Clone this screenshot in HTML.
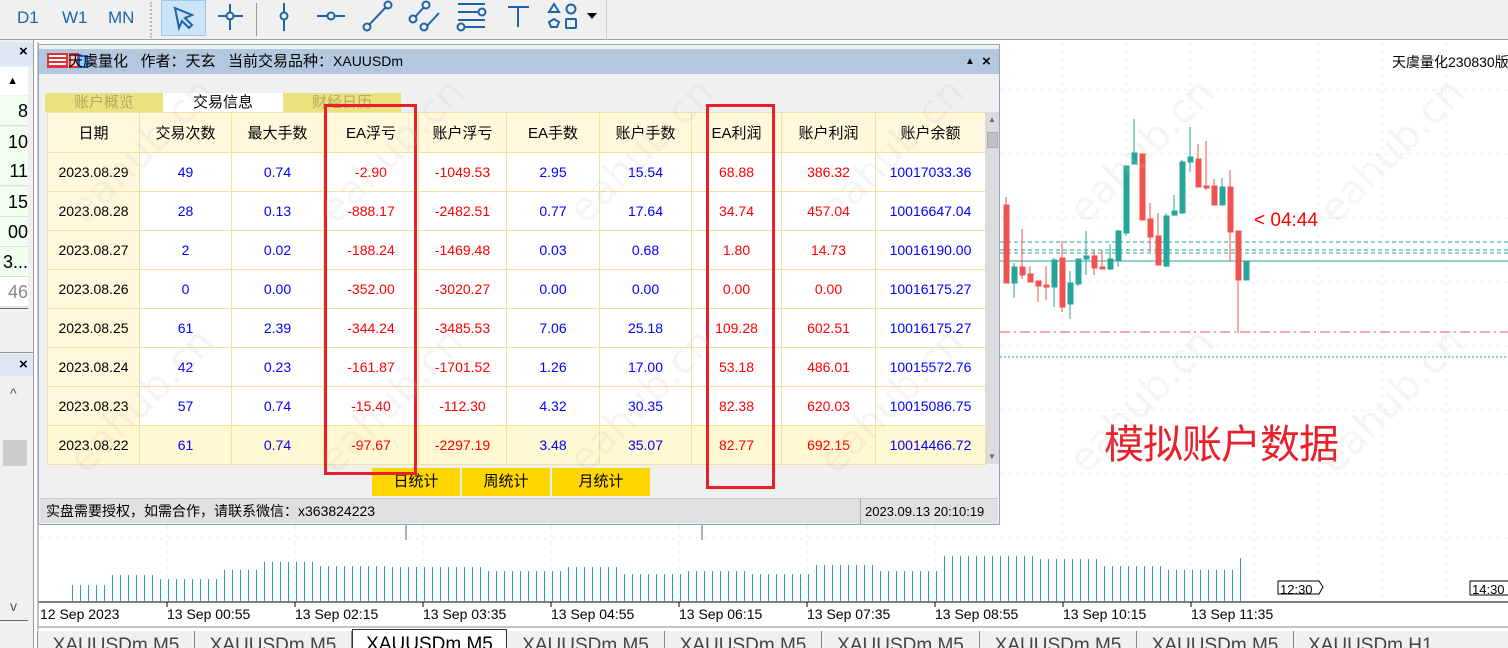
<!DOCTYPE html>
<html><head><meta charset="utf-8">
<style>
*{margin:0;padding:0;box-sizing:border-box}
html{width:1508px;height:648px;overflow:hidden}
body{width:1508px;height:648px;overflow:hidden;background:#fff;font-family:"Liberation Sans","Noto Sans CJK SC",sans-serif;position:relative}
.a{position:absolute}
.tb{left:0;top:0;width:1508px;height:40px;background:#f0f0f0;border-bottom:1px solid #a0a0a0}
.tf{top:8px;font-size:17px;color:#1e64a8}
.lp{left:0;top:40px;width:34px;height:608px;background:#f0f0f0;border-right:1px solid #999}
.num{left:0;width:28px;text-align:right;font-size:18px;color:#000;height:30px;line-height:30px;background:#f0fff0;border-bottom:1px solid #ddd}
.dlg{left:38px;top:44px;width:962px;height:481px;background:#f0f0f0;border:1px solid #8ea6c6}
.title{left:0;top:4px;width:960px;height:25px;background:#b3c7df;font-size:15px;line-height:25px;color:#000}
table{border-collapse:collapse;position:absolute;left:8px;top:67px;font-size:14px}
td{border:1px solid #eee29c;text-align:center;height:39px;background:#fff}
td.d{background:#fff8dc;color:#000}
tr.h td{background:#fff8dc;color:#000;font-size:15px;height:40px}
tr.y td{background:#fff8d0}
.b{color:#0000ff}.r{color:#ff0000}
.tab{top:48px;height:19px;font-size:15px;line-height:19px;text-align:center;color:#b8a860;background:#ece17f}
.btn{top:423px;height:28px;background:#ffd700;font-size:15px;line-height:28px;text-align:center;color:#000}
.st{left:1px;top:453px;width:958px;height:25px;background:#e0e0e0;font-size:14px;line-height:25px;color:#000;border-top:1px solid #ccc}
.rb{border:3px solid #e8202a}
.tl{top:606px;font-size:14px;color:#000}
.tabb{top:631px;height:17px;font-size:19px;line-height:30px;color:#444;background:#f0f0f0;border-right:1px solid #888;text-align:center;overflow:hidden}
.wm{font-size:40px;color:rgba(190,190,190,0.16);transform:rotate(-45deg);transform-origin:left top;font-family:"DejaVu Sans",sans-serif;white-space:nowrap}
.v{position:absolute;background:repeating-linear-gradient(90deg,#26a69a 0 1px,transparent 1px 8px)}
</style></head><body>

<svg class="a" style="left:0;top:0" width="1508" height="648">
<g stroke="#ececec" stroke-dasharray="4,4">
<line x1="1062" y1="42" x2="1062" y2="600"/><line x1="1126" y1="42" x2="1126" y2="600"/><line x1="1190" y1="42" x2="1190" y2="600"/><line x1="1254" y1="42" x2="1254" y2="600"/><line x1="1318" y1="42" x2="1318" y2="600"/><line x1="1382" y1="42" x2="1382" y2="600"/><line x1="1446" y1="42" x2="1446" y2="600"/>
<line x1="1000" y1="90" x2="1508" y2="90"/><line x1="1000" y1="154" x2="1508" y2="154"/><line x1="1000" y1="218" x2="1508" y2="218"/><line x1="1000" y1="282" x2="1508" y2="282"/><line x1="1000" y1="346" x2="1508" y2="346"/><line x1="1000" y1="410" x2="1508" y2="410"/><line x1="1000" y1="474" x2="1508" y2="474"/><line x1="40" y1="538" x2="1508" y2="538"/>
<line x1="167" y1="525" x2="167" y2="600"/><line x1="295" y1="525" x2="295" y2="600"/><line x1="423" y1="525" x2="423" y2="600"/><line x1="551" y1="525" x2="551" y2="600"/><line x1="679" y1="525" x2="679" y2="600"/><line x1="807" y1="525" x2="807" y2="600"/><line x1="935" y1="525" x2="935" y2="600"/>
</g>
<g stroke="#26a69a" stroke-dasharray="4,3"><line x1="1000" y1="242" x2="1508" y2="242"/><line x1="1000" y1="250" x2="1508" y2="250"/><line x1="1000" y1="253" x2="1508" y2="253"/><line x1="1000" y1="357" x2="1508" y2="357" stroke-dasharray="2,2"/></g>
<line x1="1000" y1="261" x2="1508" y2="261" stroke="#26a69a"/>
<line x1="1000" y1="332" x2="1508" y2="332" stroke="#ef5350" stroke-dasharray="10,4,2,4"/>
<g stroke-width="1">
<g fill="#ef5350" stroke="#ef5350">
<line x1="1006" y1="197" x2="1006" y2="283"/><rect x="1004" y="205" width="5" height="78"/>
<line x1="1022" y1="229" x2="1022" y2="279"/><rect x="1020" y="267" width="5" height="8"/>
<line x1="1030" y1="266" x2="1030" y2="282"/><rect x="1028" y="274" width="5" height="8"/>
<line x1="1038" y1="281" x2="1038" y2="302"/><rect x="1036" y="281" width="5" height="5"/>
<line x1="1046" y1="266" x2="1046" y2="300"/><rect x="1044" y="285" width="5" height="2"/>
<line x1="1062" y1="241" x2="1062" y2="312"/><rect x="1060" y="258" width="5" height="49"/>
<line x1="1094" y1="250" x2="1094" y2="275"/><rect x="1092" y="256" width="5" height="12"/>
<line x1="1102" y1="250" x2="1102" y2="269"/><rect x="1100" y="267" width="5" height="2"/>
<rect x="1140" y="154" width="5" height="66"/>
<line x1="1150" y1="203" x2="1150" y2="252"/><rect x="1148" y="219" width="5" height="18"/>
<line x1="1158" y1="213" x2="1158" y2="265"/><rect x="1156" y="236" width="5" height="29"/>
<line x1="1198" y1="144" x2="1198" y2="187"/><rect x="1196" y="159" width="5" height="28"/>
<line x1="1206" y1="141" x2="1206" y2="190"/><rect x="1204" y="186" width="5" height="2"/>
<line x1="1214" y1="179" x2="1214" y2="205"/><rect x="1212" y="186" width="5" height="19"/>
<line x1="1230" y1="170" x2="1230" y2="261"/><rect x="1228" y="187" width="5" height="45"/>
<line x1="1238" y1="231" x2="1238" y2="333"/><rect x="1236" y="231" width="5" height="49"/>
</g>
<g fill="#26a69a" stroke="#26a69a">
<line x1="1014" y1="263" x2="1014" y2="298"/><rect x="1012" y="267" width="5" height="16"/>
<line x1="1054" y1="258" x2="1054" y2="307"/><rect x="1052" y="260" width="5" height="27"/>
<line x1="1070" y1="271" x2="1070" y2="319"/><rect x="1068" y="283" width="5" height="21"/>
<line x1="1078" y1="259" x2="1078" y2="286"/><rect x="1076" y="259" width="5" height="25"/>
<line x1="1086" y1="231" x2="1086" y2="275"/><rect x="1084" y="256" width="5" height="3"/>
<line x1="1110" y1="244" x2="1110" y2="270"/><rect x="1108" y="259" width="5" height="10"/>
<line x1="1118" y1="230" x2="1118" y2="267"/><rect x="1116" y="231" width="5" height="29"/>
<line x1="1126" y1="166" x2="1126" y2="236"/><rect x="1124" y="166" width="5" height="67"/>
<line x1="1134" y1="119" x2="1134" y2="164"/><rect x="1132" y="153" width="5" height="11"/>
<line x1="1166" y1="213" x2="1166" y2="267"/><rect x="1164" y="216" width="5" height="50"/>
<line x1="1174" y1="195" x2="1174" y2="216"/><rect x="1172" y="211" width="5" height="4"/>
<line x1="1182" y1="160" x2="1182" y2="214"/><rect x="1180" y="162" width="5" height="51"/>
<line x1="1190" y1="127" x2="1190" y2="172"/><rect x="1188" y="157" width="5" height="5"/>
<line x1="1222" y1="178" x2="1222" y2="205"/><rect x="1220" y="187" width="5" height="18"/>
<rect x="1244" y="261" width="5" height="19"/>
</g></g>
<line x1="406" y1="524" x2="406" y2="540" stroke="#666"/><line x1="702" y1="524" x2="702" y2="540" stroke="#666"/>
<line x1="38" y1="602" x2="1508" y2="602" stroke="#000"/>
<g stroke="#000"><line x1="167" y1="602" x2="167" y2="607"/><line x1="295" y1="602" x2="295" y2="607"/><line x1="423" y1="602" x2="423" y2="607"/><line x1="551" y1="602" x2="551" y2="607"/><line x1="679" y1="602" x2="679" y2="607"/><line x1="807" y1="602" x2="807" y2="607"/><line x1="935" y1="602" x2="935" y2="607"/><line x1="1063" y1="602" x2="1063" y2="607"/><line x1="1191" y1="602" x2="1191" y2="607"/></g>
<path d="M1278 581h41l4 6-4 7h-41z" fill="#fff" stroke="#000"/>
<rect x="1470" y="581" width="40" height="14" fill="#fff" stroke="#000"/>
<line x1="38" y1="42" x2="38" y2="630" stroke="#888"/>
<line x1="38" y1="627" x2="1508" y2="627" stroke="#888"/>
</svg>

<div class="v" style="left:72px;top:585px;width:40px;height:16px"></div>
<div class="v" style="left:112px;top:575px;width:48px;height:26px"></div>
<div class="v" style="left:160px;top:579px;width:64px;height:22px"></div>
<div class="v" style="left:224px;top:570px;width:40px;height:31px"></div>
<div class="v" style="left:264px;top:562px;width:56px;height:39px"></div>
<div class="v" style="left:320px;top:566px;width:72px;height:35px"></div>
<div class="v" style="left:392px;top:567px;width:96px;height:34px"></div>
<div class="v" style="left:488px;top:571px;width:80px;height:30px"></div>
<div class="v" style="left:568px;top:567px;width:56px;height:34px"></div>
<div class="v" style="left:624px;top:574px;width:64px;height:27px"></div>
<div class="v" style="left:688px;top:571px;width:64px;height:30px"></div>
<div class="v" style="left:752px;top:574px;width:64px;height:27px"></div>
<div class="v" style="left:816px;top:565px;width:64px;height:36px"></div>
<div class="v" style="left:880px;top:571px;width:64px;height:30px"></div>
<div class="v" style="left:944px;top:556px;width:96px;height:45px"></div>
<div class="v" style="left:1040px;top:559px;width:64px;height:42px"></div>
<div class="v" style="left:1104px;top:566px;width:64px;height:35px"></div>
<div class="v" style="left:1168px;top:570px;width:72px;height:31px"></div>
<div class="v" style="left:1240px;top:558px;width:8px;height:43px"></div>

<div class="a" style="left:1392px;top:52px;font-size:14px;color:#000;white-space:nowrap">天虞量化230830版</div>
<div class="a" style="left:1254px;top:210px;font-size:19px;color:#ff0000">&lt; 04:44</div>
<div class="a" style="left:1104px;top:412px;font-size:40px;color:#e8202a;letter-spacing:-1px">模拟账户数据</div>
<div class="a tl" style="left:1280px;top:582px;font-size:13px">12:30</div>
<div class="a tl" style="left:1472px;top:582px;font-size:13px">14:30</div>

<div class="a tl" style="left:40px">12 Sep 2023</div>
<div class="a tl" style="left:167px">13 Sep 00:55</div>
<div class="a tl" style="left:295px">13 Sep 02:15</div>
<div class="a tl" style="left:423px">13 Sep 03:35</div>
<div class="a tl" style="left:551px">13 Sep 04:55</div>
<div class="a tl" style="left:679px">13 Sep 06:15</div>
<div class="a tl" style="left:807px">13 Sep 07:35</div>
<div class="a tl" style="left:935px">13 Sep 08:55</div>
<div class="a tl" style="left:1063px">13 Sep 10:15</div>
<div class="a tl" style="left:1191px">13 Sep 11:35</div>

<div class="a tabb" style="left:37px;width:158px;border-left:1px solid #888">XAUUSDm M5</div>
<div class="a tabb" style="left:195px;width:157px">XAUUSDm M5</div>
<div class="a tabb" style="left:352px;width:155px;top:629px;height:19px;background:#fff;border:1px solid #333;border-bottom:none;color:#000;line-height:30px">XAUUSDm M5</div>
<div class="a tabb" style="left:507px;width:158px">XAUUSDm M5</div>
<div class="a tabb" style="left:665px;width:157px">XAUUSDm M5</div>
<div class="a tabb" style="left:822px;width:158px">XAUUSDm M5</div>
<div class="a tabb" style="left:980px;width:157px">XAUUSDm M5</div>
<div class="a tabb" style="left:1137px;width:157px">XAUUSDm M5</div>
<div class="a tabb" style="left:1294px;width:214px;border-right:none;text-align:left;padding-left:14px">XAUUSDm H1</div>

<div class="a tb"></div>
<div class="a tf" style="left:17px">D1</div>
<div class="a tf" style="left:62px">W1</div>
<div class="a tf" style="left:108px">MN</div>
<div class="a" style="left:150px;top:2px;width:3px;height:36px;border-left:2px dotted #bbb"></div>
<div class="a" style="left:161px;top:0;width:45px;height:36px;background:#cce4f7;border:1px solid #99c9ef"></div>
<div class="a" style="left:256px;top:3px;width:1px;height:33px;background:#999"></div>
<div class="a" style="left:606px;top:0;width:1px;height:40px;background:#ccc"></div>
<svg class="a" style="left:150px;top:0" width="460" height="40" fill="none" stroke="#1e64a8" stroke-width="2">
<path d="M25 8l17 7-7 3 7 7-3 3-7-7-3 7z"/>
<path d="M68 16h25M80 4v26"/><circle cx="80" cy="16" r="3.5" fill="#f0f0f0"/>
<path d="M134 3v28"/><circle cx="134" cy="16" r="3.5" fill="#f0f0f0"/>
<path d="M167 16h28"/><circle cx="181" cy="16" r="3.5" fill="#f0f0f0"/>
<path d="M219 25l17-18"/><circle cx="217" cy="27" r="3.5" fill="#f0f0f0"/><circle cx="238" cy="5" r="3.5" fill="#f0f0f0"/>
<path d="M265 17l9-10M277 26l12-13"/><circle cx="263" cy="19" r="3.5" fill="#f0f0f0"/><circle cx="276" cy="5" r="3.5" fill="#f0f0f0"/><circle cx="274" cy="27" r="3.5" fill="#f0f0f0"/>
<path d="M308 4h27M308 12h22M308 20h27M315 27h20"/><circle cx="332" cy="12" r="3.5" fill="#f0f0f0"/><circle cx="311" cy="27" r="3.5" fill="#f0f0f0"/>
<path d="M358 7h21M368 7v20"/>
<path d="M404 4l5 8h-10z"/><circle cx="421" cy="9" r="4.5"/><path d="M404 19l5 3-2 5h-6l-2-5z"/><rect x="416" y="19" width="10" height="9" rx="1"/>
<path d="M437 13h10l-5 6z" fill="#000" stroke="none"/>
</svg>

<div class="a lp">
<div class="a" style="left:0;top:2px;width:33px;height:24px;background:#dde8f4"></div>
<div class="a" style="left:19px;top:3px;font-size:15px;font-weight:bold">×</div>
<div class="a" style="left:0;top:27px;width:28px;height:28px;background:#fff;font-size:11px;text-align:right;padding-right:10px;line-height:28px">▲</div>
<div class="a num" style="top:56px">8</div>
<div class="a num" style="top:87px">10</div>
<div class="a num" style="top:116px">11</div>
<div class="a num" style="top:147px">15</div>
<div class="a num" style="top:177px">00</div>
<div class="a num" style="top:207px">3...</div>
<div class="a num" style="top:237px;color:#888;background:#fff">46</div>
<div class="a" style="left:0;top:268px;width:28px;height:1px;background:#666"></div>
<div class="a" style="left:0;top:312px;width:33px;height:1px;background:#999"></div>
<div class="a" style="left:0;top:314px;width:33px;height:22px;background:#dde8f4"></div>
<div class="a" style="left:19px;top:316px;font-size:15px;font-weight:bold">×</div>
<div class="a" style="left:10px;top:345px;font-size:14px;color:#555">^</div>
<div class="a" style="left:3px;top:400px;width:24px;height:26px;background:#cdcdcd"></div>
<div class="a" style="left:10px;top:558px;font-size:14px;color:#555">v</div>
<div class="a" style="left:0;top:580px;width:28px;height:1px;background:#666"></div>
</div>

<div class="a dlg">
<div class="a title"><span style="position:absolute;left:8px;top:4px;width:21px;height:15px;border:2px solid #d33;background:repeating-linear-gradient(#fff 0 2px,#d33 2px 4px)"></span><span style="position:absolute;left:30px;top:4px;width:10px;height:15px;border:2px solid #d33;background:#fcc"></span><span style="position:absolute;left:39px;top:6px;width:10px;height:13px;border:2px solid #1e64c8;background:#9cf"></span><span style="position:absolute;left:29px">天虞量化 &nbsp; 作者：天玄 &nbsp; 当前交易品种：<span style="font-size:14px">XAUUSDm</span></span>
<span style="position:absolute;left:926px;font-size:10px">▲</span><span style="position:absolute;left:943px;font-weight:bold;font-size:15px">×</span></div>
<div class="a tab" style="left:6px;width:118px">账户概览</div>
<div class="a tab" style="left:124px;width:120px;background:#fff;color:#000">交易信息</div>
<div class="a tab" style="left:244px;width:118px">财经日历</div>
<table>
<tr class="h"><td style="width:92px">日期</td><td style="width:92px">交易次数</td><td style="width:92px">最大手数</td><td style="width:95px">EA浮亏</td><td style="width:88px">账户浮亏</td><td style="width:93px">EA手数</td><td style="width:92px">账户手数</td><td style="width:90px">EA利润</td><td style="width:94px">账户利润</td><td style="width:110px">账户余额</td></tr>
<tr><td class="d">2023.08.29</td><td class="b">49</td><td class="b">0.74</td><td class="r">-2.90</td><td class="r">-1049.53</td><td class="b">2.95</td><td class="b">15.54</td><td class="r">68.88</td><td class="r">386.32</td><td class="b">10017033.36</td></tr>
<tr><td class="d">2023.08.28</td><td class="b">28</td><td class="b">0.13</td><td class="r">-888.17</td><td class="r">-2482.51</td><td class="b">0.77</td><td class="b">17.64</td><td class="r">34.74</td><td class="r">457.04</td><td class="b">10016647.04</td></tr>
<tr><td class="d">2023.08.27</td><td class="b">2</td><td class="b">0.02</td><td class="r">-188.24</td><td class="r">-1469.48</td><td class="b">0.03</td><td class="b">0.68</td><td class="r">1.80</td><td class="r">14.73</td><td class="b">10016190.00</td></tr>
<tr><td class="d">2023.08.26</td><td class="b">0</td><td class="b">0.00</td><td class="r">-352.00</td><td class="r">-3020.27</td><td class="b">0.00</td><td class="b">0.00</td><td class="r">0.00</td><td class="r">0.00</td><td class="b">10016175.27</td></tr>
<tr><td class="d">2023.08.25</td><td class="b">61</td><td class="b">2.39</td><td class="r">-344.24</td><td class="r">-3485.53</td><td class="b">7.06</td><td class="b">25.18</td><td class="r">109.28</td><td class="r">602.51</td><td class="b">10016175.27</td></tr>
<tr><td class="d">2023.08.24</td><td class="b">42</td><td class="b">0.23</td><td class="r">-161.87</td><td class="r">-1701.52</td><td class="b">1.26</td><td class="b">17.00</td><td class="r">53.18</td><td class="r">486.01</td><td class="b">10015572.76</td></tr>
<tr><td class="d">2023.08.23</td><td class="b">57</td><td class="b">0.74</td><td class="r">-15.40</td><td class="r">-112.30</td><td class="b">4.32</td><td class="b">30.35</td><td class="r">82.38</td><td class="r">620.03</td><td class="b">10015086.75</td></tr>
<tr class="y"><td class="d">2023.08.22</td><td class="b">61</td><td class="b">0.74</td><td class="r">-97.67</td><td class="r">-2297.19</td><td class="b">3.48</td><td class="b">35.07</td><td class="r">82.77</td><td class="r">692.15</td><td class="b">10014466.72</td></tr>
</table>
<div class="a" style="left:946px;top:67px;width:14px;height:352px;background:#dcdcdc"><div style="position:absolute;left:2px;top:20px;width:11px;height:16px;background:#c0c0c0;border:1px solid #aaa"></div><div style="position:absolute;left:3px;top:3px;font-size:8px;color:#666">▲</div><div style="position:absolute;left:3px;bottom:3px;font-size:8px;color:#666">▼</div></div>
<div class="a btn" style="left:333px;width:88px">日统计</div>
<div class="a btn" style="left:423px;width:88px">周统计</div>
<div class="a btn" style="left:513px;width:98px">月统计</div>
<div class="a st"><span style="position:absolute;left:6px">实盘需要授权，如需合作，请联系微信：x363824223</span><span style="position:absolute;left:820px;border-left:1px solid #aaa;padding-left:4px;font-size:13px">2023.09.13 20:10:19</span></div>
</div>

<div class="a rb" style="left:324px;top:104px;width:93px;height:371px"></div>
<div class="a rb" style="left:706px;top:104px;width:69px;height:385px"></div>

<div class="a wm" style="left:60px;top:200px">eahub.cn</div>
<div class="a wm" style="left:310px;top:200px">eahub.cn</div>
<div class="a wm" style="left:560px;top:200px">eahub.cn</div>
<div class="a wm" style="left:810px;top:200px">eahub.cn</div>
<div class="a wm" style="left:1060px;top:200px">eahub.cn</div>
<div class="a wm" style="left:1310px;top:200px">eahub.cn</div>
<div class="a wm" style="left:60px;top:450px">eahub.cn</div>
<div class="a wm" style="left:310px;top:450px">eahub.cn</div>
<div class="a wm" style="left:560px;top:450px">eahub.cn</div>
<div class="a wm" style="left:810px;top:450px">eahub.cn</div>
<div class="a wm" style="left:1060px;top:450px">eahub.cn</div>
<div class="a wm" style="left:1310px;top:450px">eahub.cn</div>
</body></html>
